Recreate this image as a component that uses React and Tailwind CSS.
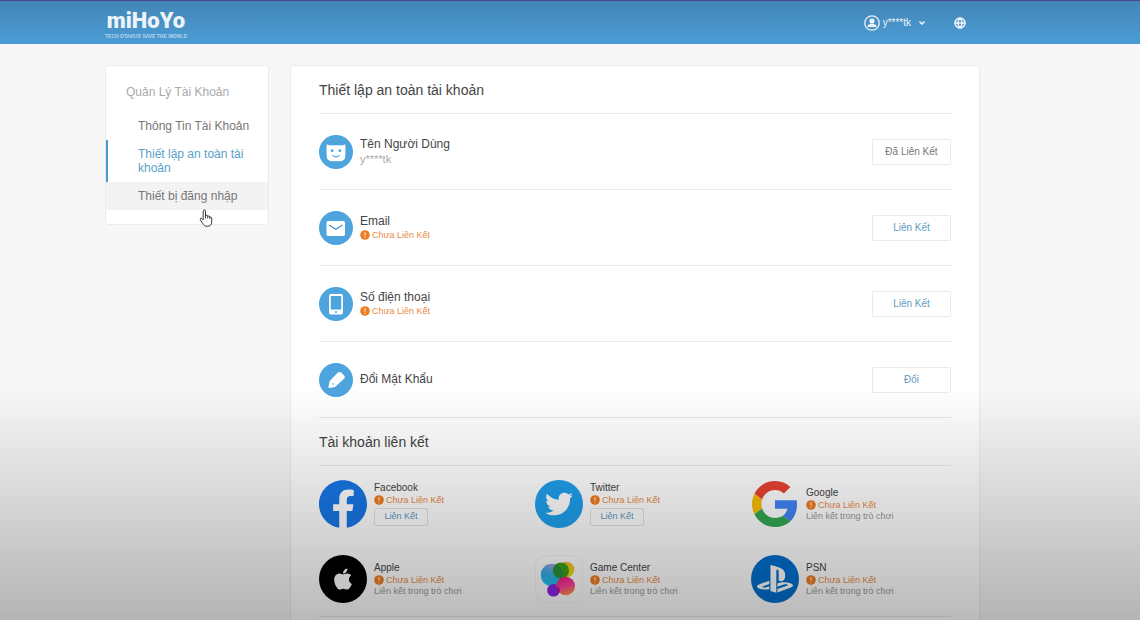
import { useState } from 'react';
import { ChevronDown, Globe } from 'lucide-react';
import { FaApple, FaPlaystation, FaTwitter } from 'react-icons/fa';

const MENU = [
  { id: 'info',     label: 'Thông Tin Tài Khoản' },
  { id: 'security', label: 'Thiết lập an toàn tài khoản' },
  { id: 'devices',  label: 'Thiết bị đăng nhập' },
];

const SETTINGS = [
  { id: 'user',     icon: FaceIcon,   name: 'Tên Người Dùng', value: 'y****tk', action: 'Đã Liên Kết', done: true },
  { id: 'email',    icon: MailIcon,   name: 'Email',          unlinked: true,   action: 'Liên Kết' },
  { id: 'phone',    icon: PhoneIcon,  name: 'Số điện thoại',  unlinked: true,   action: 'Liên Kết' },
  { id: 'password', icon: PencilIcon, name: 'Đổi Mật Khẩu',   action: 'Đổi' },
];

const LINKED = [
  { id: 'facebook', name: 'Facebook',    logo: FacebookLogo, canLink: true },
  { id: 'twitter',  name: 'Twitter',     logo: TwitterLogo,  canLink: true },
  { id: 'google',   name: 'Google',      logo: GoogleLogo },
  { id: 'apple',    name: 'Apple',       logo: AppleLogo },
  { id: 'gc',       name: 'Game Center', logo: GameCenterLogo },
  { id: 'psn',      name: 'PSN',         logo: PsnLogo },
];

export default function App() {
  const [active, setActive] = useState('security');

  return (
    <div className="flex min-h-screen flex-col bg-[#f7f7f7] font-['Liberation_Sans',Arial,sans-serif] text-[#444]">
      <Header />

      <div className="flex flex-1 items-start gap-[21px] pt-[21px] pr-40 pl-[105px]">
        <Sidebar active={active} onSelect={setActive} />

        <main className="min-w-0 flex-1 self-stretch rounded-t border border-b-0 border-[#ebebeb] bg-white px-7">
          <SectionTitle>Thiết lập an toàn tài khoản</SectionTitle>
          {SETTINGS.map(s => <SettingRow key={s.id} {...s} />)}

          <SectionTitle>Tài khoản liên kết</SectionTitle>
          <ul className="grid grid-cols-3 gap-x-4 border-b border-[#e9e9e9]">
            {LINKED.map(l => <LinkedAccount key={l.id} {...l} />)}
          </ul>
        </main>
      </div>

      {/* Bottom shade */}
      <div className="pointer-events-none fixed inset-x-0 bottom-0 h-[232px] bg-linear-to-b from-black/0 to-black/27" />
    </div>
  );
}

function Header() {
  return (
    <header className="flex h-11 items-center justify-between border-t border-[#4b4596] bg-linear-to-b from-[#4386b6] to-[#4a9cd6] pr-[174px] pl-[105px] text-white/90">
      <a href="#home" className="flex flex-col items-center pt-0.5">
        <span className="font-[Roboto,sans-serif] text-[22px] leading-6 font-black">miHoYo</span>
        <span className="text-[5px] leading-[6px] font-bold text-white/60">TECH OTAKUS SAVE THE WORLD</span>
      </a>
      <div className="flex items-center gap-7">
        <button className="flex items-center gap-[3px] text-[10px]">
          <UserIcon />
          y****tk
          <ChevronDown className="ml-1 size-2" strokeWidth={5} />
        </button>
        <button aria-label="Language">
          <Globe className="size-3" strokeWidth={3} />
        </button>
      </div>
    </header>
  );
}

function Sidebar({ active, onSelect }) {
  return (
    <nav className="w-[164px] shrink-0 rounded border border-[#ebebeb] bg-white pt-4 pb-3.5">
      <h2 className="mb-2.5 pl-5 text-[12px] leading-5 text-[#aaa]">Quản Lý Tài Khoản</h2>
      <ul>
        {MENU.map(m => (
          <li key={m.id} className="relative">
            <button
              onClick={() => onSelect(m.id)}
              className={`block w-full border-l-2 py-[7px] pr-4 pl-[30px] text-left text-[12px] leading-[14px] ${
                m.id === active ? 'border-[#4a9bcb] text-[#5a9fc9]' : 'border-transparent text-[#777]'
              } ${m.id === 'devices' ? 'bg-[#f3f3f3]' : ''}`}
            >
              {m.label}
            </button>
            {m.id === 'devices' && <HandCursor />}
          </li>
        ))}
      </ul>
    </nav>
  );
}

function SectionTitle({ children }) {
  return (
    <h2 className="flex h-12 items-center border-b border-[#e9e9e9] pt-0.5 text-[14px]">{children}</h2>
  );
}

function SettingRow({ icon: Icon, name, value, unlinked, action, done }) {
  return (
    <section className="flex h-19 items-center gap-[7px] border-b border-[#e9e9e9]">
      <Icon />
      <div className="flex-1 pb-0.5">
        <h3 className="text-[12px] leading-4">{name}</h3>
        {value && <p className="text-[11px] leading-[14px] text-[#aaa]">{value}</p>}
        {unlinked && <Unlinked />}
      </div>
      <button className={`h-[26px] w-[79px] rounded-xs border border-[#ebebeb] text-[10px] ${done ? 'text-[#777]' : 'text-[#5f9cbf]'}`}>
        {action}
      </button>
    </section>
  );
}

function Unlinked() {
  return (
    <p className="flex items-center gap-0.5 text-[9px] leading-3 text-[#ea8a45]">
      <svg viewBox="0 0 10 10" className="size-2.5">
        <circle cx="5" cy="5" r="4.8" fill="#f07c22" />
        <path d="M5 2.2v3.4M5 6.8v1" stroke="#fff" strokeWidth="1" />
      </svg>
      Chưa Liên Kết
    </p>
  );
}

function LinkedAccount({ name, logo: Logo, canLink }) {
  return (
    <li className="flex h-[75px] items-center gap-[7px]">
      <Logo />
      <div>
        <h3 className="text-[10px] leading-3">{name}</h3>
        <Unlinked />
        {canLink
          ? <button className="mt-0.5 block h-[18px] w-[54px] rounded-xs border border-[#e2e2e2] text-[9px] text-[#5f9cbf]">Liên Kết</button>
          : <p className="text-[9px] leading-[10px] text-[#999]">Liên kết trong trò chơi</p>}
      </div>
    </li>
  );
}

/* ---- Setting icons ---- */

function UserIcon() {
  return (
    <svg viewBox="0 0 16 16" className="size-4" fill="currentColor">
      <circle cx="8" cy="8" r="7.2" fill="none" stroke="currentColor" strokeWidth="1.3" />
      <circle cx="8" cy="6" r="2.6" />
      <path d="M3.4 11.900c0-2.300 2-3.200 4.600-3.200s4.600.900 4.600 3.200z" />
    </svg>
  );
}

function IconDisc({ children }) {
  return (
    <svg viewBox="0 0 34 34" className="size-[34px] shrink-0">
      <circle cx="17" cy="17" r="17" fill="#4ea4dc" />
      {children}
    </svg>
  );
}

function FaceIcon() {
  return (
    <IconDisc>
      <path d="M7.600 10.300c0-.8.600-1 1.300-.6.800.4 1.500.5 2.500.5h11.200c1 0 1.700-.1 2.500-.5.700-.4 1.300-.2 1.300.6v10.500c0 3.600-1.900 5.400-5.400 5.400h-8c-3.500 0-5.400-1.800-5.400-5.400z" fill="#fff" />
      <circle cx="13.200" cy="15.700" r="1.400" fill="#4ea4dc" />
      <circle cx="20.800" cy="15.700" r="1.400" fill="#4ea4dc" />
      <path d="M13.800 20.600c1.500 1.700 4.900 1.700 6.400 0" fill="none" stroke="#4ea4dc" strokeWidth="1.200" strokeLinecap="round" />
    </IconDisc>
  );
}

function MailIcon() {
  return (
    <IconDisc>
      <rect x="7.500" y="10" width="18.500" height="15" rx="1.800" fill="#fff" />
      <path d="M10.500 14.300l6.300 4 6.300-4" fill="none" stroke="#4291c4" strokeWidth="1.300" strokeLinecap="round" />
    </IconDisc>
  );
}

function PhoneIcon() {
  return (
    <IconDisc>
      <rect x="10" y="7" width="14" height="20.500" rx="2" fill="#fff" />
      <rect x="11.800" y="9" width="10.400" height="13.500" fill="#4ea4dc" />
      <circle cx="17" cy="25" r="1" fill="#4ea4dc" />
    </IconDisc>
  );
}

function PencilIcon() {
  return (
    <IconDisc>
      <path d="M18.900 9.600c1-.8 2.600-.8 3.600.2l2.600 2.700c.9 1 .9 2.300-.1 3.300L16 23.900l-5.700 1.100c-.7.100-1-.3-.9-.9l1.300-6.100z" fill="#fff" />
      <circle cx="14" cy="21" r=".8" fill="#4ea4dc" />
    </IconDisc>
  );
}

/* ---- Brand logos ---- */

function FacebookLogo() {
  return (
    <svg viewBox="0 0 24 24" className="size-12 shrink-0">
      <circle cx="12" cy="12" r="11.900" fill="#fff" />
      <path
        fill="#1877e6"
        d="M24 12.073c0-6.627-5.373-12-12-12s-12 5.373-12 12c0 5.990 4.388 10.954 10.125 11.854v-8.385H7.078v-3.470h3.047V9.430c0-3.007 1.792-4.669 4.533-4.669 1.312 0 2.686.235 2.686.235v2.953H15.830c-1.491 0-1.956.925-1.956 1.874v2.250h3.328l-.532 3.470h-2.796v8.385C19.612 23.027 24 18.062 24 12.073z"
      />
    </svg>
  );
}

function TwitterLogo() {
  return (
    <span className="flex size-12 shrink-0 items-center justify-center rounded-full bg-[#1fa1ee]">
      <FaTwitter className="size-7 text-white" />
    </span>
  );
}

function AppleLogo() {
  return (
    <span className="flex size-12 shrink-0 items-center justify-center rounded-full bg-black">
      <FaApple className="size-6 text-white" />
    </span>
  );
}

function PsnLogo() {
  return (
    <span className="flex size-12 shrink-0 items-center justify-center rounded-full bg-[#0270cf]">
      <FaPlaystation className="size-9 text-white" />
    </span>
  );
}

function GoogleLogo() {
  return (
    <svg viewBox="0 0 48 48" className="size-12 shrink-0 p-px">
      <path fill="#EA4335" d="M24 9.500c3.540 0 6.710 1.220 9.210 3.600l6.850-6.850C35.900 2.380 30.470 0 24 0 14.620 0 6.510 5.380 2.560 13.220l7.980 6.190C12.430 13.720 17.740 9.500 24 9.500z" />
      <path fill="#4285F4" d="M46.980 24.550c0-1.570-.15-3.090-.38-4.550H24v9.020h12.940c-.58 2.960-2.260 5.480-4.780 7.180l7.730 6c4.510-4.180 7.090-10.360 7.090-17.650z" />
      <path fill="#FBBC05" d="M10.530 28.590c-.48-1.450-.76-2.990-.76-4.590s.27-3.140.76-4.590l-7.980-6.190C.92 16.460 0 20.120 0 24c0 3.880.92 7.540 2.560 10.780l7.970-6.190z" />
      <path fill="#34A853" d="M24 48c6.480 0 11.930-2.130 15.890-5.810l-7.730-6c-2.150 1.450-4.920 2.300-8.160 2.300-6.260 0-11.570-4.220-13.470-9.910l-7.980 6.190C6.510 42.620 14.620 48 24 48z" />
    </svg>
  );
}

function GameCenterLogo() {
  return (
    <svg viewBox="0 0 48 48" className="size-12 shrink-0">
      <defs>
        <linearGradient id="gcBlue" x1="0.700" y1="0" x2="0.300" y2="1">
          <stop offset="0" stopColor="#b79be6" />
          <stop offset=".5" stopColor="#35aee6" />
          <stop offset="1" stopColor="#19c4f0" />
        </linearGradient>
        <linearGradient id="gcYellow" x1="0" y1="0" x2="0" y2="1">
          <stop offset="0" stopColor="#ffb92e" />
          <stop offset="1" stopColor="#d9e600" />
        </linearGradient>
        <linearGradient id="gcPink" x1="0" y1="0" x2="0.300" y2="1">
          <stop offset="0" stopColor="#f01a78" />
          <stop offset=".6" stopColor="#ff3fa0" />
          <stop offset="1" stopColor="#ff8a4a" />
        </linearGradient>
        <clipPath id="gcClip"><circle cx="17" cy="20" r="11.200" /></clipPath>
      </defs>
      <rect x=".5" y=".5" width="47" height="47" rx="10" fill="none" stroke="#f6f6f6" />
      <circle cx="31.500" cy="14.500" r="7.800" fill="url(#gcYellow)" />
      <circle cx="17" cy="20" r="11.200" fill="url(#gcBlue)" />
      <circle cx="26" cy="15.500" r="8" fill="#3fa01c" />
      <circle cx="26" cy="15.500" r="8" fill="#188c48" clipPath="url(#gcClip)" opacity=".6" />
      <circle cx="18.500" cy="35.300" r="6.300" fill="#8a22e6" />
      <circle cx="30.700" cy="31" r="9.300" fill="url(#gcPink)" />
      <path d="M24.200 32.400a6.300 6.300 0 0 1-.4 6 9.300 9.300 0 0 1-2.300-6.200z" fill="#b31592" />
    </svg>
  );
}

function HandCursor() {
  return (
    <svg viewBox="0 0 14 18" className="pointer-events-none absolute top-[27px] left-[93px] h-[18px] w-3.5">
      <path
        d="M4.200 10.800V2.200c0-1.600 2.300-1.600 2.300 0v4.900c.1-1.300 2.100-1.300 2.200 0v.6c.2-1.100 2-1 2.100.2v.7c.3-.9 1.900-.7 1.900.6v3.600c0 2.800-1.500 4.500-4.200 4.500-2.600 0-3.700-1-4.800-3L1.400 10.900c-.7-1.300.8-2.300 1.800-1.200z"
        fill="#fff"
        stroke="#333"
        strokeWidth="1"
        strokeLinejoin="round"
      />
      <path d="M6.500 7v2.500M8.700 7.500v2M10.800 8.300v1.500" stroke="#333" strokeWidth=".9" />
    </svg>
  );
}
